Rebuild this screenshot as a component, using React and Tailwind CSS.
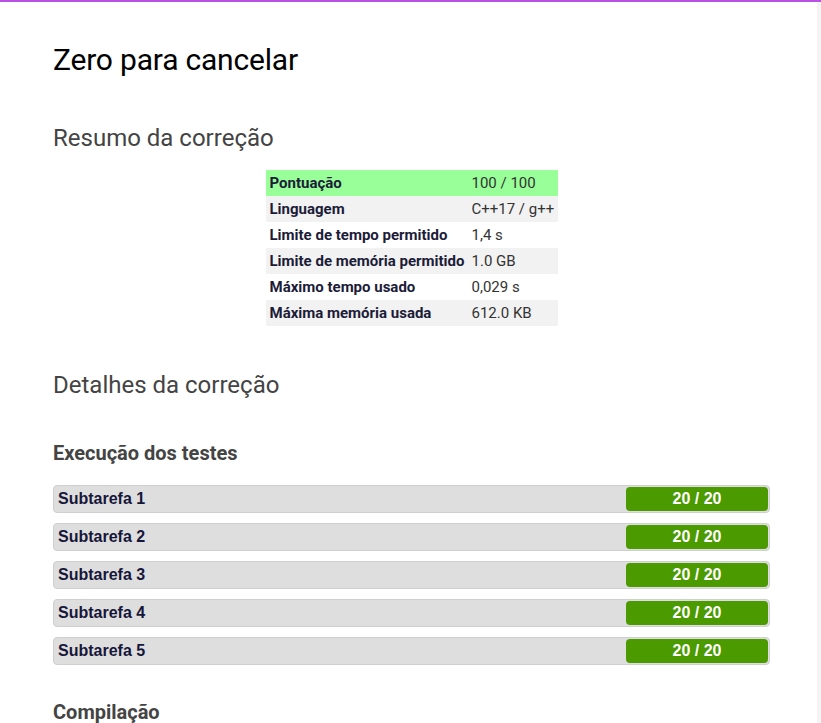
export default function App() {
  const rows = [
    ["Pontuação", "100 / 100", "bg-[#99ff99]"],
    ["Linguagem", "C++17 / g++", "bg-[#f2f2f2]"],
    ["Limite de tempo permitido", "1,4 s", "bg-white"],
    ["Limite de memória permitido", "1.0 GB", "bg-[#f2f2f2]"],
    ["Máximo tempo usado", "0,029 s", "bg-white"],
    ["Máxima memória usada", "612.0 KB", "bg-[#f2f2f2]"],
  ];
  const subs = [1, 2, 3, 4, 5];
  return (
    <div className="w-[821px] h-[723px] overflow-hidden bg-white flex flex-col" style={{ fontFamily: "Roboto, sans-serif" }}>
      <div className="h-[2px] bg-[#bb50e4] shrink-0" />
      <div className="flex flex-1">
        <div className="flex-1 pl-[53px] pr-[47px]">
          <h1 className="mt-[40px] text-[30px] leading-[36px] text-black tracking-[-0.2px]">Zero para cancelar</h1>
          <h2 className="mt-[45px] text-[24px] leading-[30px] text-[#444]">Resumo da correção</h2>
          <div className="flex justify-center mt-[17px]">
            <table className="text-[15px] border-collapse">
              <tbody>
                {rows.map(([k, v, bg]) => (
                  <tr key={k} className={`${bg} h-[26px]`}>
                    <td className="pl-[4px] pr-[4px] font-bold text-[#1c1c38] w-[203px] whitespace-nowrap">{k}</td>
                    <td className="pl-[3px] text-[#333] w-[89px] whitespace-nowrap">{v}</td>
                  </tr>
                ))}
              </tbody>
            </table>
          </div>
          <h2 className="mt-[44px] text-[24px] leading-[30px] text-[#444]">Detalhes da correção</h2>
          <h3 className="mt-[41px] text-[20px] leading-[24px] font-bold text-[#444]">Execução dos testes</h3>
          <div className="mt-[20px] flex flex-col gap-[10px]">
            {subs.map((n) => (
              <div key={n} className="h-[28px] bg-[#dedede] border border-[#cfcfcf] rounded-[4px] flex items-center justify-between pl-[4px] pr-[1px]" style={{ fontFamily: '"Liberation Sans", Arial, sans-serif' }}>
                <span className="font-bold text-[16px] text-[#16163a]">Subtarefa {n}</span>
                <span className="w-[142px] h-[24px] rounded-[4px] bg-[#4b9a00] text-white font-bold text-[16px] flex items-center justify-center">20 / 20</span>
              </div>
            ))}
          </div>
          <h3 className="mt-[35px] text-[20px] leading-[24px] font-bold text-[#444]">Compilação</h3>
        </div>
        <div className="w-[4px] bg-[#f4f4f4] shrink-0" />
      </div>
    </div>
  );
}
